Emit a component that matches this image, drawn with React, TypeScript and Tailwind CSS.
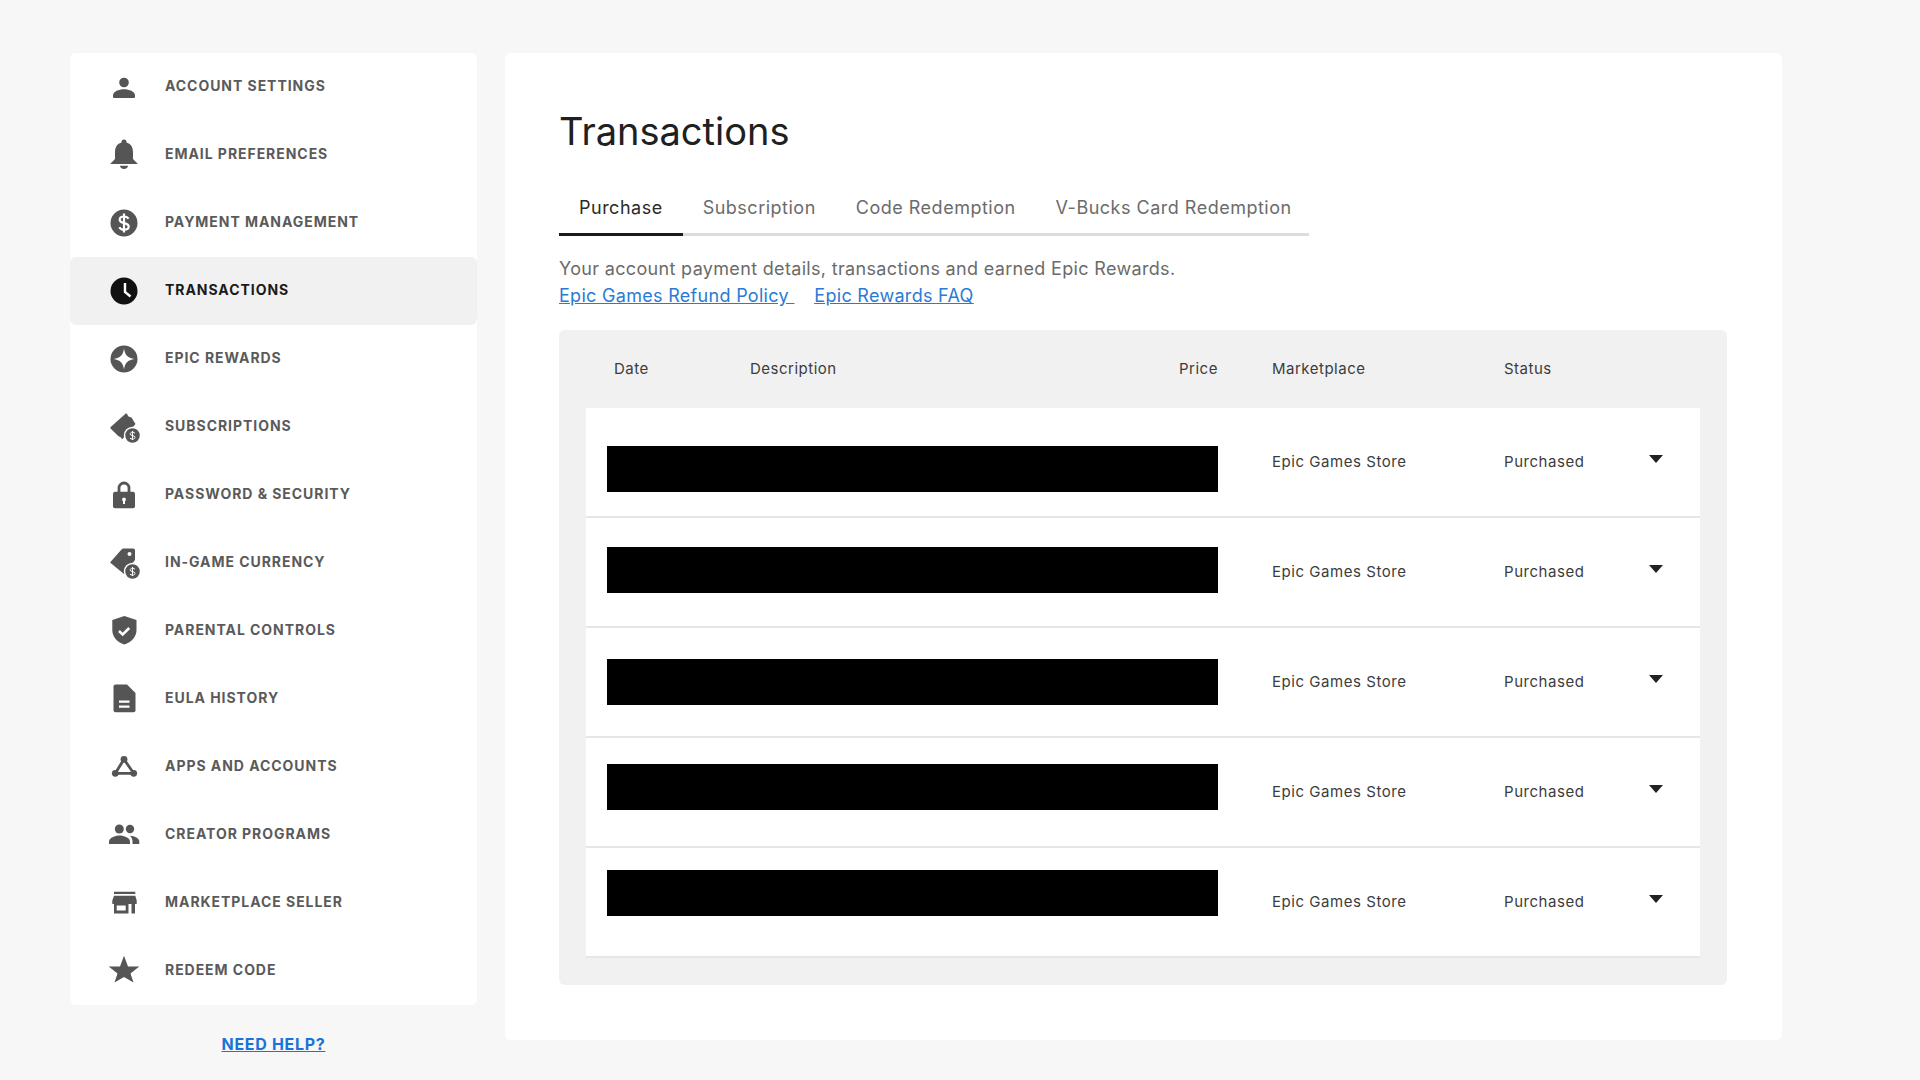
import React from 'react';

const FONT = 'font-[Inter,sans-serif]';

function Coin() {
  return (
    <g>
      <circle cx="24.5" cy="24.5" r="8" fill="#555555" stroke="#ffffff" strokeWidth="1.5" />
      <path d="M27 22.3c-.6-.8-1.500-1.100-2.500-1.100-1.200 0-2.300.6-2.300 1.700 0 2.400 4.800 1.100 4.800 3.500 0 1.100-1.100 1.800-2.500 1.800-1.100 0-2-.4-2.600-1.200M24.500 20v9" fill="none" stroke="#ffffff" strokeWidth="1" />
    </g>
  );
}

const icons: Record<string, React.ReactNode> = {
  person: (
    <>
      <circle cx="16" cy="11.500" r="4.800" />
      <path d="M5 26v-1.500c0-4 6-6.200 11-6.200s11 2.200 11 6.200V26a1 1 0 0 1-1 1H6a1 1 0 0 1-1-1z" />
    </>
  ),
  bell: (
    <>
      <path d="M16 .5A2.500 2.500 0 0 1 18.500 3v.6C23.500 5 25 9 25 13.500v6.500l4.500 4.500v.5h-27v-.5L7 20v-6.500C7 9 8.500 5 13.500 3.600V3A2.500 2.500 0 0 1 16 .5z" />
      <path d="M12 26.800h8c0 2-1.800 3.200-4 3.200s-4-1.200-4-3.200z" />
    </>
  ),
  dollar: (
    <>
      <circle cx="16" cy="16" r="13.500" />
      <path d="M20.500 11.800c-.8-1.600-2.500-2.300-4.500-2.300-2.500 0-4.300 1.200-4.300 3.200 0 4.600 9 2.200 9 6.800 0 2.100-2 3.200-4.500 3.200-2.200 0-4-.8-4.900-2.500M16 6.500v19" fill="none" stroke="#ffffff" strokeWidth="2.200" />
    </>
  ),
  clock: (
    <>
      <circle cx="16" cy="16" r="13.500" />
      <path d="M17 8v9l5.500 4.500" fill="none" stroke="#ffffff" strokeWidth="2.400" />
    </>
  ),
  rewards: (
    <>
      <circle cx="16" cy="16" r="13.500" />
      <path d="M16 5.500c1 6.500 3.500 9.500 10.500 10.500-7 1-9.500 4-10.500 10.500C15 20 12.500 17 5.500 16 12.500 15 15 12 16 5.500z" fill="#ffffff" />
    </>
  ),
  ticket: (
    <>
      <path d="M2.700 16 17.500 2.800c.6-.5 1.300-.4 1.700.2.300 1.700 1.800 3 3.500 3.300.5.1.9.4 1.200.9l3.600 5.800L14 28.500c-.3-1.700-1.800-3-3.500-3.300L3 18c-.7-.7-.8-1.400-.3-2z" />
      <Coin />
    </>
  ),
  lock: (
    <>
      <path d="M11 13V9a5 5 0 0 1 10 0v4" fill="none" stroke="#555555" strokeWidth="2.800" />
      <path d="M7 12.700h18a2 2 0 0 1 2 2v12.600a2 2 0 0 1-2 2H7a2 2 0 0 1-2-2V14.700a2 2 0 0 1 2-2z" />
      <path d="M16 18.500a2 2 0 0 1 1 3.700V25h-2v-2.800a2 2 0 0 1 1-3.700z" fill="#ffffff" />
    </>
  ),
  tag: (
    <>
      <path d="M2 15.500 13.500 2.500c.6-.7 1.300-1 2-1H25c1.300 0 2 .7 2 2V13L16 27z" />
      <circle cx="21.500" cy="7" r="2" fill="#ffffff" />
      <Coin />
    </>
  ),
  shield: (
    <>
      <path d="M16.300 1 28.500 5v10c0 7-5 12-12.200 14.500C9 27 4.300 22 4.300 15V5z" />
      <path d="m11 16 3.700 3.500 6.500-6.500" fill="none" stroke="#ffffff" strokeWidth="2.500" />
    </>
  ),
  doc: (
    <>
      <path d="M7.500 1.500H19l8.500 8.500v17.300a2 2 0 0 1-2 2h-18a2 2 0 0 1-2-2v-23.800a2 2 0 0 1 2-2z" />
      <path d="M11 17.500h10.500v2.200H11zM11 22.500h10.500v2.200H11z" fill="#ffffff" />
    </>
  ),
  network: (
    <>
      <path d="M16 8.300 7.300 22.300h18.400z" fill="none" stroke="#555555" strokeWidth="2.800" />
      <circle cx="16" cy="8.300" r="3.400" />
      <circle cx="7.300" cy="22.300" r="3.400" />
      <circle cx="25.700" cy="22.300" r="3.400" />
    </>
  ),
  people: (
    <>
      <circle cx="11.300" cy="10" r="4.500" />
      <circle cx="22" cy="10" r="4.200" />
      <path d="M1 25v-2.500c0-3.500 6-6 10.500-6s10.500 2.500 10.500 6V25z" />
      <path d="M24.500 25v-2.500c0-2.500-1-4.400-2.500-5.800 4.500.2 9.300 2.300 9.300 5.800V25z" />
    </>
  ),
  store: (
    <>
      <path d="M6 4.700h21.300v2.300H6zM6 8.700h21.300l1.400 4.800V17H4.300v-3.500z" />
      <path fillRule="evenodd" d="M6 17h14.500v9.500H6zM8.700 18.500v5h9v-5zM23.500 17h3.500v9.500h-3.500z" />
    </>
  ),
  star: <path d="M16 .7 20 11.500h11.300l-8.800 7 3 9-9.500-5.500-9.500 5.500 3-9-8.800-7H12z" />,
};

const navItems = [
  { label: 'ACCOUNT SETTINGS', icon: 'person' },
  { label: 'EMAIL PREFERENCES', icon: 'bell' },
  { label: 'PAYMENT MANAGEMENT', icon: 'dollar' },
  { label: 'TRANSACTIONS', icon: 'clock', active: true },
  { label: 'EPIC REWARDS', icon: 'rewards' },
  { label: 'SUBSCRIPTIONS', icon: 'ticket' },
  { label: 'PASSWORD & SECURITY', icon: 'lock' },
  { label: 'IN-GAME CURRENCY', icon: 'tag' },
  { label: 'PARENTAL CONTROLS', icon: 'shield' },
  { label: 'EULA HISTORY', icon: 'doc' },
  { label: 'APPS AND ACCOUNTS', icon: 'network' },
  { label: 'CREATOR PROGRAMS', icon: 'people' },
  { label: 'MARKETPLACE SELLER', icon: 'store' },
  { label: 'REDEEM CODE', icon: 'star' },
];

const tabs = ['Purchase', 'Subscription', 'Code Redemption', 'V-Bucks Card Redemption'];

// the black bars sit at a different height in every row of the reference
const redactions = ['top-[38px]', 'top-[29px]', 'top-[31px]', 'top-[26px]', 'top-[22px]'];

export default function App() {
  return (
    <div className={`${FONT} flex h-screen items-start gap-[28px] overflow-hidden bg-[#f7f7f7] pl-[70px] pt-[53px]`}>
      {/* Sidebar */}
      <div className="w-[407px]">
        <nav className="rounded-md bg-white">
          {navItems.map((item) => (
            <a
              key={item.label}
              className={`flex h-[68px] items-center rounded-md pl-[38px] ${
                item.active ? 'bg-[#f1f1f1] text-[#1a1a1a]' : 'text-[#5a5a5a]'
              }`}
            >
              <svg
                viewBox="0 0 32 32"
                className={`h-8 w-8 shrink-0 ${item.active ? 'fill-[#111111]' : 'fill-[#555555]'}`}
              >
                {icons[item.icon]}
              </svg>
              <span className="mb-[3px] ml-[25px] text-[14px] leading-5 font-bold tracking-[0.95px]">
                {item.label}
              </span>
            </a>
          ))}
        </nav>
        <div className="mt-[27px] text-center">
          <a className="text-[16px] leading-5 font-bold tracking-[0.7px] text-[#1a73d9] underline">NEED HELP?</a>
        </div>
      </div>

      {/* Main panel */}
      <main className="h-[987px] w-[1277px] rounded-md bg-white pl-[54px] pt-[53px]">
        <h1 className="text-[38px] leading-[50px] font-normal text-[#202020]">Transactions</h1>

        <div className="mt-[25px] flex h-[55px] w-[750px] border-b-[3px] border-[#dcdcdc]">
          {tabs.map((tab, i) => (
            <div
              key={tab}
              className={`-mb-[3px] shrink-0 whitespace-nowrap px-5 pt-[15px] text-[18px] leading-6 tracking-[0.5px] ${
                i === 0 ? 'border-b-[3px] border-[#1a1a1a] text-[#2a2a2a]' : 'text-[#6b6b6b]'
              }`}
            >
              {tab}
            </div>
          ))}
        </div>

        <p className="mt-[19px] text-[18px] leading-[27px] tracking-[0.33px] text-[#6b6b6b]">
          Your account payment details, transactions and earned Epic Rewards.
        </p>
        <div className="flex gap-5 text-[18px] leading-[27px] tracking-[0.3px] text-[#2a7bd3] underline">
          <a className="whitespace-pre">Epic Games Refund Policy </a>
          <a>Epic Rewards FAQ</a>
        </div>

        {/* Table */}
        <div className="mt-[21px] w-[1168px] rounded-md bg-[#f1f1f1] px-[27px] pb-[27px]">
          <div className="grid h-[78px] grid-cols-[136px_429px_38px_55px_232px_1fr] items-center pl-[28px] text-[15px] tracking-[0.5px] text-[#3c3c3c]">
            <span>Date</span>
            <span>Description</span>
            <span className="text-right">Price</span>
            <span />
            <span>Marketplace</span>
            <span>Status</span>
          </div>
          <div className="bg-white">
            {redactions.map((top) => (
              <div
                key={top}
                className="relative grid h-[110px] grid-cols-[686px_232px_1fr] items-center border-b-2 border-[#e6e6e6] text-[15px] tracking-[0.55px] text-[#3c3c3c]"
              >
                <span />
                <span>Epic Games Store</span>
                <div className="flex items-center justify-between pr-[37px]">
                  <span>Purchased</span>
                  <svg viewBox="0 0 14 8" className="-mt-[6px] h-2 w-[14px] fill-[#222222]">
                    <path d="M0 0h14L7 8z" />
                  </svg>
                </div>
                <div className={`absolute left-[20.5px] h-[46px] w-[611.5px] bg-black ${top}`} />
              </div>
            ))}
          </div>
        </div>
      </main>
    </div>
  );
}
